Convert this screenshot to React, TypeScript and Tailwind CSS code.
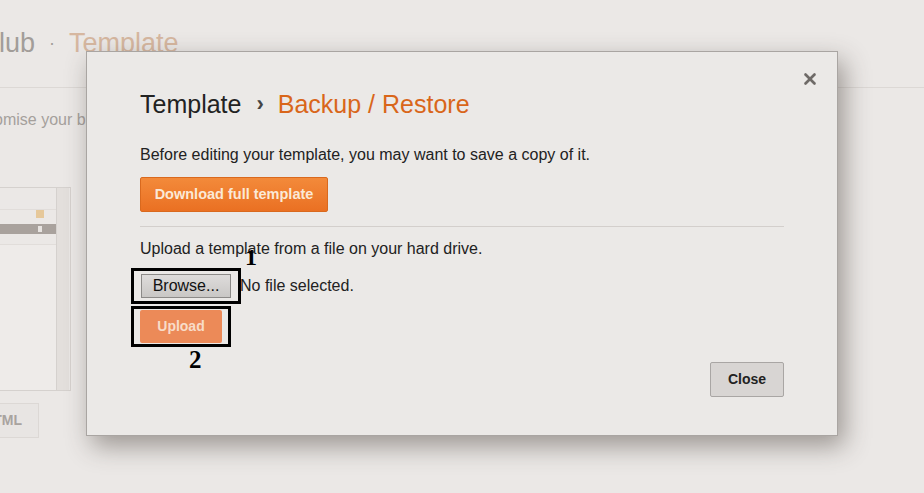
import { X } from 'lucide-react';

function Background() {
  return (
    <div className="relative h-[493px] w-[924px] overflow-hidden bg-[#ebe8e6]">
      <div className="flex items-center h-[88px] border-b border-[#dcd8d5] -ml-[1px] text-[27px] text-[#a29d99]">
        <span>lub</span>
        <span className="mx-[14px] text-[18px]">·</span>
        <span className="text-[#d6b7a0]">Template</span>
      </div>
      <p className="mt-[20px] -ml-[6px] text-[16px] text-[#a5a09c]">omise your blog</p>
      <div className="mt-[55px] flex h-[204px] w-[71px] border border-l-0 border-[#d5d1ce] bg-[#ebe8e6]">
        <div className="flex w-[57px] flex-col border-r border-[#d5d1ce]">
          <div className="h-[22px] border-b border-[#e1ddda]" />
          <div className="flex h-[10px] justify-end pr-[12px]">
            <div className="h-[8px] w-[8px] bg-[#e6c89a]" />
          </div>
          <div className="mt-[4px] flex h-[10px] items-center justify-end bg-[#a9a29d] pr-[14px]">
            <div className="h-[6px] w-[4px] bg-[#e8e4e1]" />
          </div>
          <div className="mt-[10px] flex-1 border-t border-[#e1ddda] bg-[#eeebe9]" />
        </div>
        <div className="w-[12px] bg-[#e3dfdc]" />
      </div>
      <div className="mt-[12px] flex h-[35px] w-[39px] items-center justify-end border border-l-0 border-[#dcd8d5] bg-[#e8e5e3] pr-[16px] text-[14px] font-bold text-[#a8a39f]">
        TML
      </div>
    </div>
  );
}

export default function App() {
  return (
    <div className="relative h-[493px] w-[924px] overflow-hidden" style={{ fontFamily: '"Liberation Sans", Arial, sans-serif' }}>
      <Background />
      <div className="absolute left-[86px] top-[51px] h-[385px] w-[752px] border border-[#a9a5a2] bg-[#ebe9e7] pl-[53px] pr-[53px] pt-[36px] shadow-[6px_10px_24px_rgba(60,50,45,0.45)]">
        <button className="absolute right-[18px] top-[18px] text-[#6e6a67]">
          <X size={18} strokeWidth={3.5} />
        </button>
        <h1 className="flex items-center text-[25px] leading-[32px] text-[#222]">
          <span>Template</span>
          <span className="ml-[15px] mr-[14px] text-[22px] font-bold text-[#444]">›</span>
          <span className="text-[#d9661a]">Backup / Restore</span>
        </h1>
        <p className="mt-[25px] text-[16px] leading-[20px] text-[#222]">Before editing your template, you may want to save a copy of it.</p>
        <button className="mt-[12px] h-[35px] w-[188px] rounded-[2px] border border-[#d9691e] bg-gradient-to-b from-[#f38a3a] to-[#ea7022] text-[14.5px] font-bold text-[#fbe9d6]">
          Download full template
        </button>
        <div className="mt-[14px] border-t border-[#d3cfcc]" />
        <p className="mt-[12px] text-[16px] leading-[20px] text-[#222]">Upload a template from a file on your hard drive.</p>
        <div className="relative -ml-[9px] mt-[9px] flex items-center">
          <div className="border-[3px] border-black px-[7px] py-[3px]">
            <div className="flex h-[24px] w-[90px] items-center justify-center border border-[#8c8a88] bg-gradient-to-b from-[#dedcdb] to-[#c9c7c5] text-[16px] text-[#111]">
              Browse...
            </div>
          </div>
          <span className="-ml-[1px] text-[16px] text-[#222]">No file selected.</span>
          <span className="absolute left-[114px] -top-[23px] text-[24px] font-bold leading-none text-black" style={{ fontFamily: '"Liberation Serif", serif' }}>1</span>
        </div>
        <div className="relative -ml-[9px] mt-[2px] w-[100px]">
          <div className="border-[3px] border-black px-[6px] py-[1px]">
            <div className="flex h-[33px] w-[82px] items-center justify-center rounded-[2px] bg-[#ec8a58] text-[14px] font-bold text-[#f8dcc8]">
              Upload
            </div>
          </div>
          <span className="absolute left-[58px] top-[41px] text-[25px] font-bold leading-none text-black" style={{ fontFamily: '"Liberation Serif", serif' }}>2</span>
        </div>
        <div className="mt-[15px] flex justify-end">
          <button className="h-[35px] w-[74px] rounded-[2px] border border-[#a9a6a4] bg-[#d8d5d3] text-[14px] font-bold text-[#222]">
            Close
          </button>
        </div>
      </div>
    </div>
  );
}
